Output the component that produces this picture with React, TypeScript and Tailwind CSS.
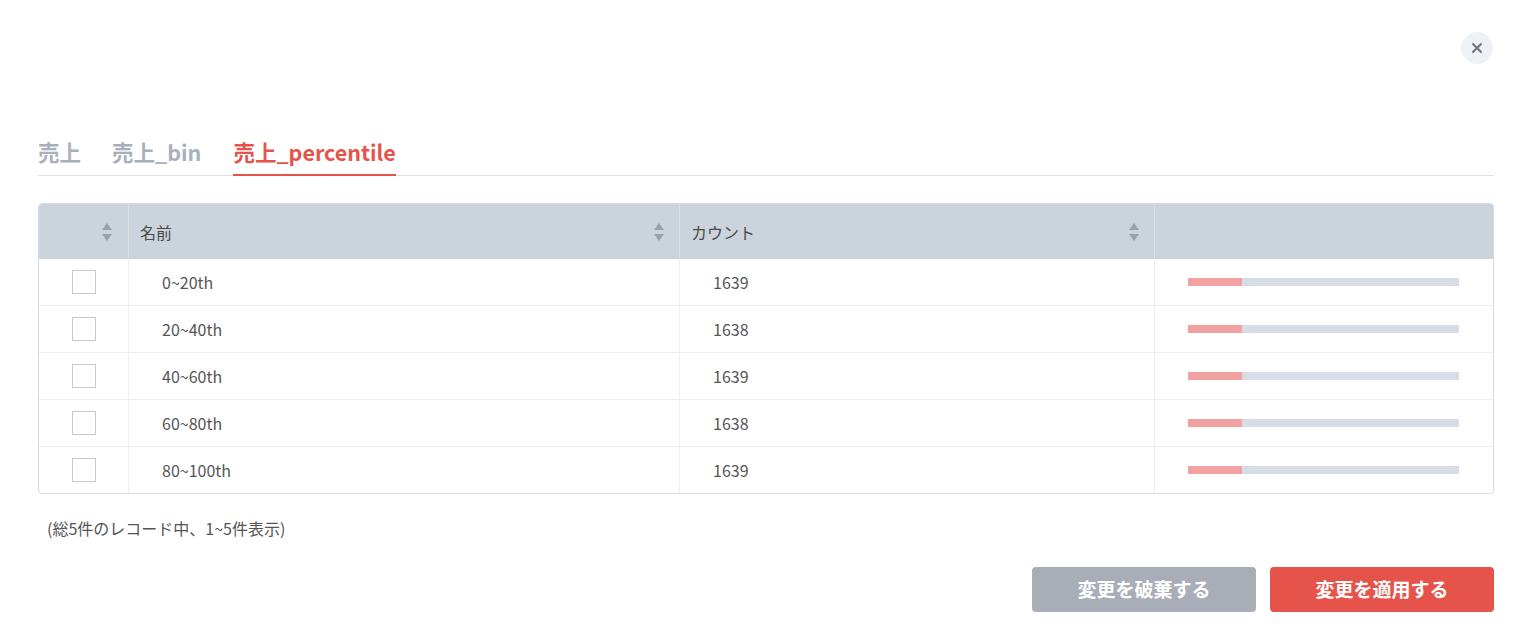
import React from "react";

const rows = [
  { name: "0~20th", count: "1639" },
  { name: "20~40th", count: "1638" },
  { name: "40~60th", count: "1639" },
  { name: "60~80th", count: "1638" },
  { name: "80~100th", count: "1639" },
];

function SortIcon() {
  return (
    <svg width="12" height="22" viewBox="0 0 12 22" className="shrink-0">
      <path d="M6 2 L11 9 L1 9 Z" fill="#9aa1ab" />
      <path d="M6 20 L11 13 L1 13 Z" fill="#9aa1ab" />
    </svg>
  );
}

export default function App() {
  return (
    <div
      className="w-[1531px] h-[639px] bg-white relative text-[#555]"
      style={{ fontFamily: '"Noto Sans CJK JP", "Noto Sans", sans-serif' }}
    >
      <button className="absolute left-[1461px] top-[32px] w-8 h-8 rounded-full bg-[#eef1f5] flex items-center justify-center">
        <svg width="12" height="12" viewBox="0 0 12 12">
          <path d="M2 2 L10 10 M10 2 L2 10" stroke="#6b7280" strokeWidth="2" strokeLinecap="round" />
        </svg>
      </button>

      <div className="pl-[38px] pr-[37px] pt-[131px]">
        {/* Tabs */}
        <div className="flex border-b border-[#dcdfe6] h-[45px]">
          <div className="text-[21.5px] font-bold text-[#a9b0bd] leading-[42px] mr-[31px]">売上</div>
          <div className="text-[21.5px] font-bold text-[#a9b0bd] leading-[42px] mr-[32px]">売上_bin</div>
          <div className="text-[21.5px] font-bold text-[#e5534b] leading-[42px] border-b-2 border-[#e5534b] h-[45px]">
            売上_percentile
          </div>
        </div>

        {/* Table */}
        <div className="mt-[27px] border border-[#d6dbe3] rounded-[4px] overflow-hidden text-[16px]">
          <div className="grid grid-cols-[90px_551px_475px_1fr] h-[55px] bg-[#cbd3dd] text-[#4a4a4a]">
            <div className="flex items-center justify-end pr-[15px] border-r border-[#dbe0e7]">
              <SortIcon />
            </div>
            <div className="flex items-center justify-between pl-[11px] pr-[14px] border-r border-[#dbe0e7]">
              <span>名前</span>
              <SortIcon />
            </div>
            <div className="flex items-center justify-between pl-[11px] pr-[14px] border-r border-[#dbe0e7]">
              <span>カウント</span>
              <SortIcon />
            </div>
            <div />
          </div>
          {rows.map((r, i) => (
            <div
              key={i}
              className={`grid grid-cols-[90px_551px_475px_1fr] ${i > 0 ? "h-[47px] border-t border-[#ebeef3]" : "h-[46px]"} text-[#555]`}
            >
              <div className="flex items-center justify-center border-r border-[#ebeef3]">
                <div className="w-[24px] h-[24px] border border-[#c8c8c8] bg-white" />
              </div>
              <div className="flex items-center pl-[33px] border-r border-[#ebeef3]">{r.name}</div>
              <div className="flex items-center pl-[33px] border-r border-[#ebeef3]">{r.count}</div>
              <div className="flex items-center pl-[33px]">
                <div className="w-[271px] h-[8px] bg-[#d6dde6] flex">
                  <div className="h-full bg-[#f1a1a1]" style={{ width: "20%" }} />
                </div>
              </div>
            </div>
          ))}
        </div>

        <div className="mt-[22px] pl-[9px] text-[16px] text-[#555]">(総5件のレコード中、1~5件表示)</div>

        <div className="mt-[27px] flex justify-end gap-[14px]">
          <button className="w-[224px] h-[45px] rounded-[4px] bg-[#a9adb8] text-white text-[19px] font-bold">
            変更を破棄する
          </button>
          <button className="w-[224px] h-[45px] rounded-[4px] bg-[#e5534b] text-white text-[19px] font-bold">
            変更を適用する
          </button>
        </div>
      </div>
    </div>
  );
}
